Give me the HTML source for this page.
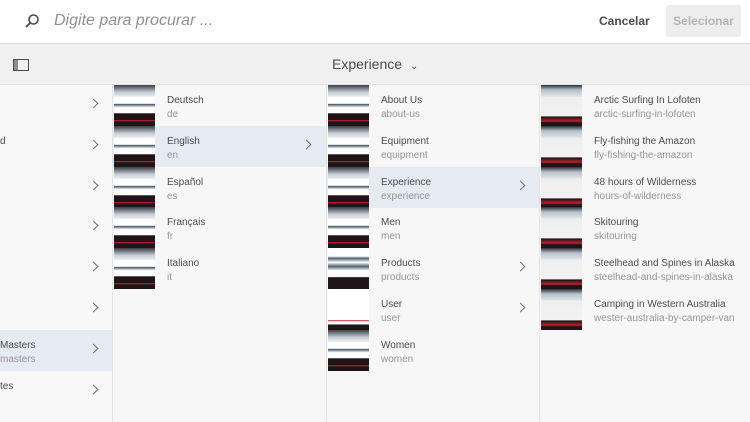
<!DOCTYPE html>
<html><head><style>
*{margin:0;padding:0;box-sizing:border-box}
body{width:750px;height:422px;overflow:hidden;background:#f7f7f7;font-family:"Liberation Sans",sans-serif;position:relative}
.hdr{position:absolute;left:0;top:0;width:750px;height:44px;background:#fff;border-bottom:1px solid #e1e1e1}
.ph{position:absolute;left:54px;top:12px;font-size:16px;font-style:italic;color:#909090}
.cancel{position:absolute;left:599px;top:14px;font-size:12px;color:#4b4b4b;font-weight:bold}
.sel{position:absolute;left:666px;top:5px;width:75px;height:32px;background:#ededed;border-radius:3px;color:#b5b5b5;font-size:12px;font-weight:bold;text-align:center;line-height:32px}
.tb{position:absolute;left:0;top:44px;width:750px;height:41px;background:#f0f0f0;border-bottom:1px solid #e4e4e4}
.title{position:absolute;left:332px;top:12px;font-size:14px;color:#4b4b4b}
.col{position:absolute;top:85px;height:337px;border-right:1px solid #e3e3e3}
.row{position:absolute;left:0;height:41px;width:100%}
.row.hl{background:#e6eaf1}
.th{position:absolute;left:1px;top:0;width:41px;height:41px;background:linear-gradient(#3a3e46 0%,#c9cfd6 18%,#e8eaec 28%,#fff 30%,#fff 45%,#4a5566 47%,#fff 55%,#fff 68%,#1d1518 70%,#261216 85%,#c02030 86%,#1d1518 90%)}
.th2{background:linear-gradient(#2a3038 0%,#b8c0c8 12%,#d8dde2 25%,#eee 30%,#f2f2f2 75%,#1d1518 78%,#c02030 88%,#1d1518 92%)}
.t{position:absolute;left:54px;top:10px;font-size:10px;color:#4b4b4b;white-space:nowrap}
.s{position:absolute;left:54px;top:24px;font-size:10px;color:#959595;white-space:nowrap}
.ch{position:absolute;top:15px;width:7px;height:7px;border-right:1.6px solid #707070;border-bottom:1.6px solid #707070;transform:rotate(-45deg)}
</style></head><body>
<div class="hdr">
<svg style="position:absolute;left:24px;top:13px" width="16" height="16" viewBox="0 0 16 16"><circle cx="9.5" cy="6.5" r="4.5" fill="none" stroke="#4b4b4b" stroke-width="1.6"/><line x1="6.3" y1="9.7" x2="2" y2="14" stroke="#4b4b4b" stroke-width="1.8"/></svg>
<div class="ph">Digite para procurar ...</div>
<div class="cancel">Cancelar</div>
<div class="sel">Selecionar</div>
</div>
<div class="tb">
<svg style="position:absolute;left:13px;top:15px" width="16" height="12" viewBox="0 0 16 12"><rect x="0.5" y="0.5" width="15" height="11" fill="none" stroke="#4b4b4b"/><rect x="1" y="1" width="4" height="10" fill="#4b4b4b" opacity=".6"/></svg>
<div class="title">Experience <span style="font-size:10px;margin-left:4px">&#8964;</span></div>
</div>

<div class="col" style="left:0;width:113px;background:#f8f8f8">
<div class="row" style="top:0"><div class="ch" style="left:90px"></div></div>
<div class="row" style="top:41px"><div class="t" style="left:0">d</div><div class="ch" style="left:90px"></div></div>
<div class="row" style="top:82px"><div class="ch" style="left:90px"></div></div>
<div class="row" style="top:122px"><div class="ch" style="left:90px"></div></div>
<div class="row" style="top:163px"><div class="ch" style="left:90px"></div></div>
<div class="row" style="top:204px"><div class="ch" style="left:90px"></div></div>
<div class="row hl" style="top:245px"><div class="t" style="left:0">Masters</div><div class="s" style="left:0">masters</div><div class="ch" style="left:90px"></div></div>
<div class="row" style="top:286px"><div class="t" style="left:0">tes</div><div class="ch" style="left:90px"></div></div>
</div>

<div class="col" style="left:113px;width:214px">
<div class="row" style="top:0"><div class="th"></div><div class="t">Deutsch</div><div class="s">de</div></div>
<div class="row hl" style="top:41px"><div class="th"></div><div class="t">English</div><div class="s">en</div><div class="ch" style="left:190px"></div></div>
<div class="row" style="top:82px"><div class="th"></div><div class="t">Español</div><div class="s">es</div></div>
<div class="row" style="top:122px"><div class="th"></div><div class="t">Français</div><div class="s">fr</div></div>
<div class="row" style="top:163px"><div class="th"></div><div class="t">Italiano</div><div class="s">it</div></div>
</div>

<div class="col" style="left:327px;width:213px">
<div class="row" style="top:0"><div class="th"></div><div class="t">About Us</div><div class="s">about-us</div></div>
<div class="row" style="top:41px"><div class="th"></div><div class="t">Equipment</div><div class="s">equipment</div></div>
<div class="row hl" style="top:82px"><div class="th"></div><div class="t">Experience</div><div class="s">experience</div><div class="ch" style="left:190px"></div></div>
<div class="row" style="top:122px"><div class="th"></div><div class="t">Men</div><div class="s">men</div></div>
<div class="row" style="top:163px"><div class="th" style="background:linear-gradient(#fff 0%,#fff 20%,#506070 25%,#fff 35%,#506070 45%,#fff 55%,#fff 70%,#1d1518 72%,#1d1518 100%)"></div><div class="t">Products</div><div class="s">products</div><div class="ch" style="left:190px"></div></div>
<div class="row" style="top:204px"><div class="th" style="background:linear-gradient(#fff 0%,#fff 75%,#c02030 77%,#fff 80%,#fff 85%,#1d1518 88%)"></div><div class="t">User</div><div class="s">user</div><div class="ch" style="left:190px"></div></div>
<div class="row" style="top:245px"><div class="th"></div><div class="t">Women</div><div class="s">women</div></div>
</div>

<div class="col" style="left:540px;width:210px;border:none">
<div class="row" style="top:0"><div class="th th2"></div><div class="t">Arctic Surfing In Lofoten</div><div class="s">arctic-surfing-in-lofoten</div></div>
<div class="row" style="top:41px"><div class="th th2"></div><div class="t">Fly-fishing the Amazon</div><div class="s">fly-fishing-the-amazon</div></div>
<div class="row" style="top:82px"><div class="th th2"></div><div class="t">48 hours of Wilderness</div><div class="s">hours-of-wilderness</div></div>
<div class="row" style="top:122px"><div class="th th2"></div><div class="t">Skitouring</div><div class="s">skitouring</div></div>
<div class="row" style="top:163px"><div class="th th2"></div><div class="t">Steelhead and Spines in Alaska</div><div class="s">steelhead-and-spines-in-alaska</div></div>
<div class="row" style="top:204px"><div class="th th2"></div><div class="t">Camping in Western Australia</div><div class="s">wester-australia-by-camper-van</div></div>
</div>
</body></html>
